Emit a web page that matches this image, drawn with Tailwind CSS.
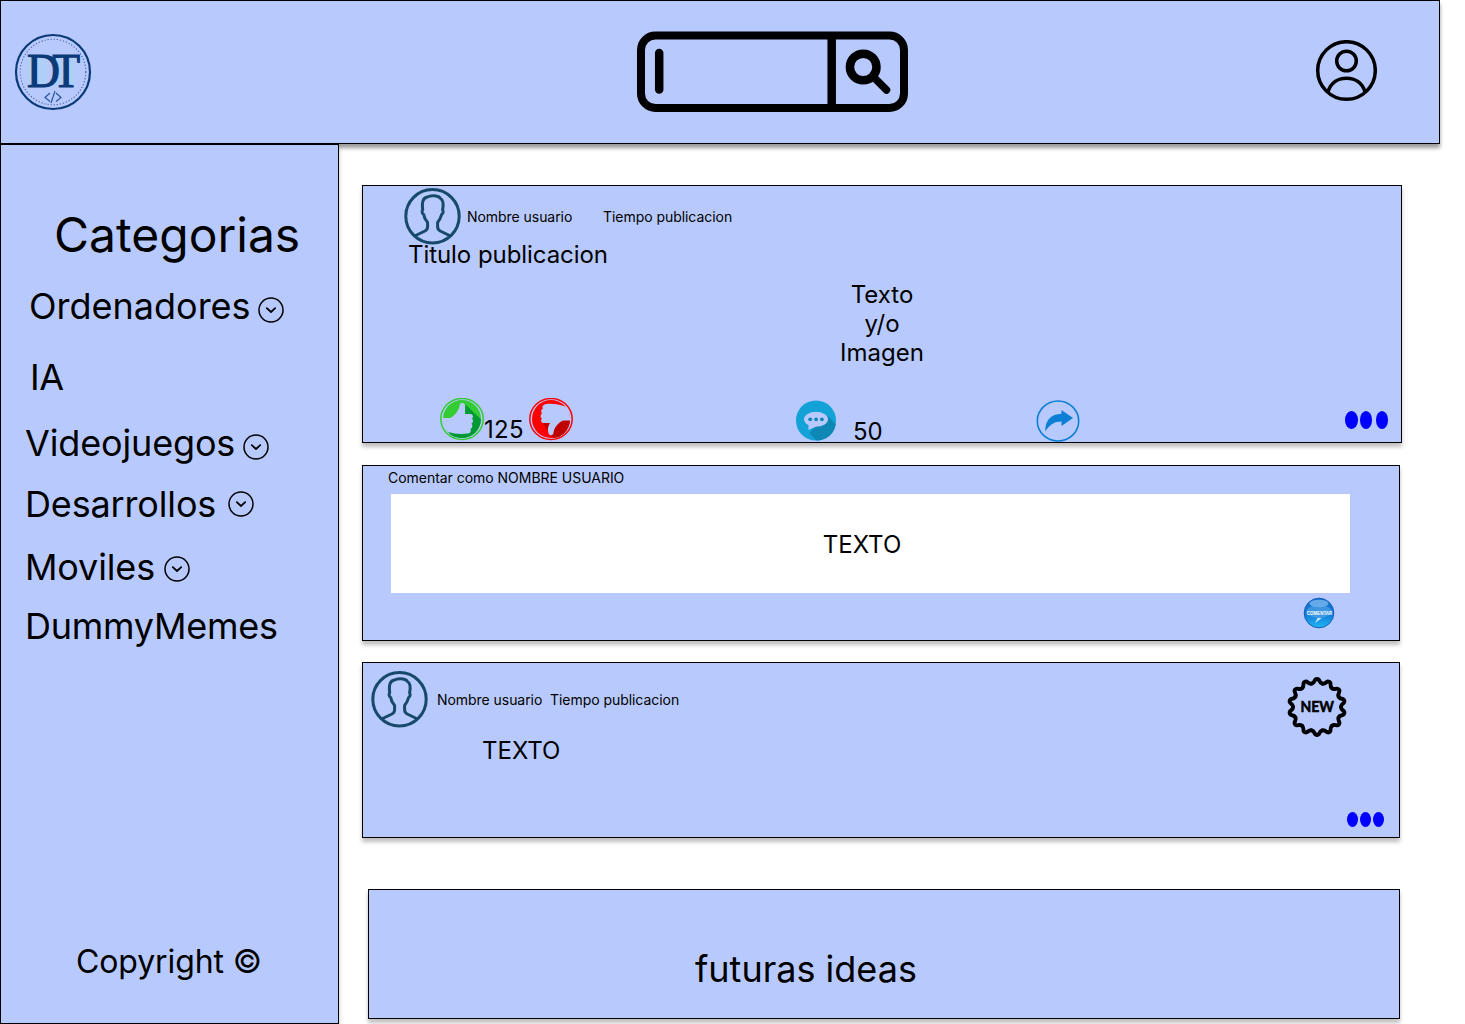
<!DOCTYPE html>
<html lang="es">
<head>
<meta charset="utf-8">
<title>DT</title>
<script src="https://cdn.jsdelivr.net/npm/@tailwindcss/browser@4"></script>
</head>
<body class="flex h-[1024px] w-[1465px] flex-col overflow-hidden bg-white font-['Inter',sans-serif] text-black">
<svg class="hidden">
  <symbol id="chev" viewBox="0 0 26 26"><circle cx="13" cy="13" r="12" fill="none" stroke="#000" stroke-width="1.5"/><path d="M8.800 11.200 13 15l4.200-3.800" fill="none" stroke="#000" stroke-width="1.800" stroke-linecap="round" stroke-linejoin="round"/></symbol>
  <symbol id="avatar" viewBox="0 0 57 57"><g fill="none" stroke="#17496a" stroke-width="3" stroke-linejoin="round"><circle cx="28.500" cy="28.300" r="26.700"/><path d="M10.500 48 21 43C23 42 23.600 40.500 23.600 38.500v-4C21 31.500 20 29 19.700 26.500C18 25.500 17.600 23 18.700 22C17.500 13 20 9.500 23.500 9C27 6.800 34.500 7.500 36.500 10.500C39.500 12 39.500 17 38.600 22C39.600 23 39.200 25.500 37.600 26.500C37 29 36 31.500 33.600 34.500V38.500C33.600 40.500 34.200 42 36.200 43L46.500 48"/></g></symbol>
</svg>

<header class="flex h-36 w-[1440px] shrink-0 items-center border border-black bg-[#b8cafd] shadow-[0_4px_4px_rgba(0,0,0,0.4)]">
  <svg class="ml-[13px] size-[78px] shrink-0" viewBox="0 0 78 78">
    <circle cx="39" cy="39" r="37" fill="none" stroke="#0b3a78" stroke-width="2.200"/>
    <circle cx="39" cy="39" r="32.800" fill="none" stroke="#44609c" stroke-width="1.100" stroke-dasharray="1.200 1.900"/>
    <path d="M13 23h20v32H13zM42 25h20v26H42z" fill="#a9d2f3" opacity=".6"/>
    <text transform="translate(13 54) scale(.95 1)" font-family="Liberation Serif" font-size="48" fill="#0b3a78" stroke="#0b3a78" stroke-width="1.200" letter-spacing="-8">DT</text>
    <path d="m36 60-5 4.500 5 4M42 60l5 4.500-5 4M41 58l-4 12" fill="none" stroke="#2457a0" stroke-width="1.200"/>
  </svg>
  <svg class="ml-[544px] h-[82px] w-[273px] shrink-0" viewBox="635.5 31 273 82" fill="none" stroke="#000">
    <rect x="640.500" y="35.500" width="263" height="72.500" rx="14.500" stroke-width="8"/>
    <path d="M831.200 35v73" stroke-width="8.500"/>
    <path d="M658.700 53v36.500" stroke-width="8.500" stroke-linecap="round"/>
    <circle cx="862.700" cy="67" r="13.300" stroke-width="8.500"/>
    <path d="m873 77 13 13" stroke-width="7.500" stroke-linecap="round"/>
  </svg>
  <svg class="-mt-0.5 ml-[406px] size-[62px] shrink-0" viewBox="-0.5 0 62 62" fill="none" stroke="#000" stroke-width="3.500">
    <circle cx="31" cy="30.500" r="28.800"/><circle cx="31" cy="21" r="9.800"/><path d="M12.500 52C15 43 22 38.200 31 38.200S47 43 49.500 52"/>
  </svg>
</header>

<div class="flex min-h-0 flex-1">
  <aside class="relative flex w-[339px] shrink-0 flex-col border border-black bg-[#b8cafd] text-[36px] leading-[44px] shadow-[0_4px_4px_rgba(0,0,0,0.25)]">
    <h1 class="mt-[61px] ml-[53px] text-[48px] leading-[58px]">Categorias</h1>
    <nav class="flex flex-col">
      <a class="mt-5 ml-7 flex h-11"><span class="w-[229px]">Ordenadores</span><svg class="mt-[13px] size-[26px]"><use href="#chev"/></svg></a>
      <a class="mt-[27px] ml-[29px] h-11 tracking-[-0.5px]">IA</a>
      <a class="mt-[22px] ml-6 flex h-11"><span class="w-[218px] tracking-[-0.15px]">Videojuegos</span><svg class="mt-[13px] size-[26px]"><use href="#chev"/></svg></a>
      <a class="mt-[17px] ml-6 flex h-11"><span class="w-[203px] tracking-[-0.15px]">Desarrollos</span><svg class="mt-[9px] size-[26px]"><use href="#chev"/></svg></a>
      <a class="mt-[19px] ml-6 flex h-11"><span class="w-[139px] tracking-[-0.15px]">Moviles</span><svg class="mt-[11px] size-[26px]"><use href="#chev"/></svg></a>
      <a class="mt-[15px] ml-6 h-11 tracking-[-0.25px]">DummyMemes</a>
    </nav>
    <footer class="mt-auto mb-[42px] ml-[75px] text-[32px] leading-[39px] tracking-[-0.1px]">Copyright ©</footer>
  </aside>

  <main class="flex flex-col pt-[41px] pl-[23px]">
    <article class="flex h-[258px] w-[1040px] shrink-0 flex-col border border-black bg-[#b8cafd] shadow-[0_4px_4px_rgba(0,0,0,0.25)]">
      <div class="mt-0.5 ml-[41px] flex h-[57px] text-[14px] leading-[17px]">
        <svg class="size-[57px]"><use href="#avatar"/></svg>
        <span class="mt-5 ml-1.5 w-[136px] tracking-[-0.05px]">Nombre usuario</span>
        <span class="mt-5 tracking-[-0.05px]">Tiempo publicacion</span>
      </div>
      <h2 class="-mt-[5px] ml-[45px] text-[24px] leading-[29px] tracking-[-0.06px]">Titulo publicacion</h2>
      <p class="mt-[11px] text-center text-[24px] leading-[29px]">Texto<br>y/o<br>Imagen</p>
      <div class="mt-[30px] flex h-[45px] text-[24px] leading-[29px]">
        <svg class="mt-px ml-[76px] h-[43px] w-[45px]" viewBox="-0.5 0.5 45 43">
          <ellipse cx="22.500" cy="21.500" rx="21.200" ry="20.500" fill="none" stroke="#33cc33" stroke-width="1.500"/>
          <circle cx="22.500" cy="21.500" r="19" fill="#33cc33"/>
          <path d="M26 7 41.500 22C41 33 32 40.500 22.500 40.500C16 40.500 11 38 9 35L25 30Z" fill="#009933"/>
          <path d="M3.500 20.500H11C15 18 19 14 20.500 7C21 5 25 5 25.500 8V16.500H31C34 17 34 20 32.500 21C34 22.500 34 25 32 26C33.500 28 33 30.500 31 31.500C32 34 30.500 36 28 36C22 37 14 36.500 9 34.500C5 31 3 26 3.500 20.500Z" fill="#b8cafd"/>
        </svg>
        <span class="mt-[18px] w-11 tracking-[0.3px]">125</span>
        <svg class="mt-px h-[43px] w-[45px]" viewBox="-0.5 0.5 45 43">
          <ellipse cx="22.500" cy="21.500" rx="21.200" ry="20.500" fill="none" stroke="#f00" stroke-width="1.500"/>
          <circle cx="22.500" cy="21.500" r="19" fill="#f00"/>
          <path d="m15 26 8-1 11-2h7.500C41 33 33 40.500 25 40.500L21 37Z" fill="#c00000"/>
          <path d="M37 9C31 7 22 5.500 17 6.800C14 7.500 13.500 9.500 14.500 11C12.500 12 12 14 13.500 16C11.500 17.500 11.500 20 13.500 21C11.500 23 13 25.500 15 25.500H21.500C19 29 19 33 20 36C21.500 39 25 38 25 35C26 29 31 24 35 23H41.500C42 17 40 12 37 9Z" fill="#b8cafd"/>
        </svg>
        <svg class="mt-[3px] ml-[222px] size-[41px]" viewBox="-0.5 0 41 41">
          <circle cx="20.500" cy="20.500" r="20" fill="#12a2d8"/>
          <path d="M31 15 40.300 24C39 34 31 40.500 21 40.500L14 33Z" fill="#0f87b5"/>
          <ellipse cx="20.500" cy="19.200" rx="12" ry="7.400" fill="#b8cafd"/><path d="M13 23v7l9-4Z" fill="#b8cafd"/>
          <g fill="#0f87b5"><circle cx="14.700" cy="19.300" r="1.900"/><circle cx="20.600" cy="19.300" r="1.900"/><circle cx="26.400" cy="19.300" r="1.900"/></g>
        </svg>
        <span class="mt-5 ml-[17px] w-[183px]">50</span>
        <svg class="mt-[3px] h-[42px] w-11" viewBox="0 0 44 42">
          <ellipse cx="22" cy="21" rx="20.700" ry="20" fill="none" stroke="#0a7fd4" stroke-width="1.600"/>
          <path d="M9.300 31.500C9 20 15 14 25.500 13.700V10L37 18 25.500 26V21.500C18 21.500 14 24.500 9.300 31.500Z" fill="#0a7fd4"/>
        </svg>
        <div class="mt-[14px] ml-[265px] flex">
          <i class="h-[18px] w-[12.5px] rounded-[50%] bg-[blue]"></i><i class="ml-[2px] h-[18px] w-[12.5px] rounded-[50%] bg-[blue]"></i><i class="ml-[3.5px] h-[18px] w-[12.5px] rounded-[50%] bg-[blue]"></i>
        </div>
      </div>
    </article>

    <section class="mt-[22px] flex h-44 w-[1038px] shrink-0 flex-col border border-black bg-[#b8cafd] shadow-[0_4px_4px_rgba(0,0,0,0.25)]">
      <p class="mt-[3px] ml-[25px] text-[14px] leading-[17px] tracking-[-0.03px]">Comentar como NOMBRE USUARIO</p>
      <div class="mt-2 ml-7 flex h-[99px] w-[959px] items-center justify-center bg-white pt-0.5 pr-[17px] text-[24px] leading-[29px]">TEXTO</div>
      <svg class="mt-1 mr-16 size-8 self-end" viewBox="0 0 32 32">
        <defs><linearGradient id="ball" x2="0" y2="1"><stop stop-color="#1670cc"/><stop offset=".55" stop-color="#117bd8"/><stop offset="1" stop-color="#20b8f5"/></linearGradient></defs>
        <circle cx="16" cy="16" r="14.800" fill="url(#ball)" stroke="#155bb5" stroke-width="1"/>
        <ellipse cx="16" cy="6.500" rx="9.500" ry="3.800" fill="#8ec5f4" opacity=".65"/>
        <ellipse cx="16" cy="14.500" rx="12.500" ry="6.500" fill="#63aeea" opacity=".55"/>
        <path d="M14.500 21h4.500l-7 5Z" fill="#c5e6fc"/>
        <text transform="translate(3.700 17.700) scale(.82 1)" font-family="Liberation Sans" font-weight="bold" font-size="5.500" fill="#fff">COMENTAR</text>
      </svg>
    </section>

    <article class="mt-[21px] flex h-44 w-[1038px] shrink-0 flex-col border border-black bg-[#b8cafd] shadow-[0_4px_4px_rgba(0,0,0,0.25)]">
      <div class="mt-2 ml-2 flex h-[57px] text-[14px] leading-[17px]">
        <svg class="size-[57px]"><use href="#avatar"/></svg>
        <span class="mt-5 ml-[9px] w-[113px] tracking-[-0.05px]">Nombre usuario</span>
        <span class="mt-5 tracking-[-0.05px]">Tiempo publicacion</span>
        <svg class="mt-[5px] mr-[51px] ml-auto size-[62px]" viewBox="-31 -31 62 62">
          <g id="q"><path id="w" d="M-5.340-23.400C-1.500-24.300-3.400-28 0-28S1.500-24.300 5.340-23.400" fill="none" stroke="#000" stroke-width="3.900" stroke-linecap="round"/>
          <use href="#w" transform="rotate(25.714)"/><use href="#w" transform="rotate(51.429)"/><use href="#w" transform="rotate(77.143)"/><use href="#w" transform="rotate(102.857)"/><use href="#w" transform="rotate(128.571)"/><use href="#w" transform="rotate(154.286)"/></g>
          <use href="#q" transform="rotate(180)"/>
          <text x="-16.500" y="5.300" font-family="Lato" font-weight="bold" font-size="15.500" textLength="33.500" lengthAdjust="spacingAndGlyphs" stroke="#000" stroke-width=".6">NEW</text>
        </svg>
      </div>
      <p class="mt-2 ml-[119px] text-[24px] leading-[29px]">TEXTO</p>
      <div class="mt-auto mr-[15px] mb-2.5 flex self-end">
        <i class="h-[15px] w-[11px] rounded-[50%] bg-[blue]"></i><i class="ml-[1.5px] h-[15px] w-[11px] rounded-[50%] bg-[blue]"></i><i class="ml-[2.5px] h-[15px] w-[11px] rounded-[50%] bg-[blue]"></i>
      </div>
    </article>

    <section class="mt-[51px] ml-1.5 h-[130px] w-[1032px] shrink-0 border border-black bg-[#b8cafd] pt-[57px] pl-[326px] text-[36px] leading-[44px] shadow-[0_4px_4px_rgba(0,0,0,0.25)]">futuras ideas</section>
  </main>
</div>
</body>
</html>
